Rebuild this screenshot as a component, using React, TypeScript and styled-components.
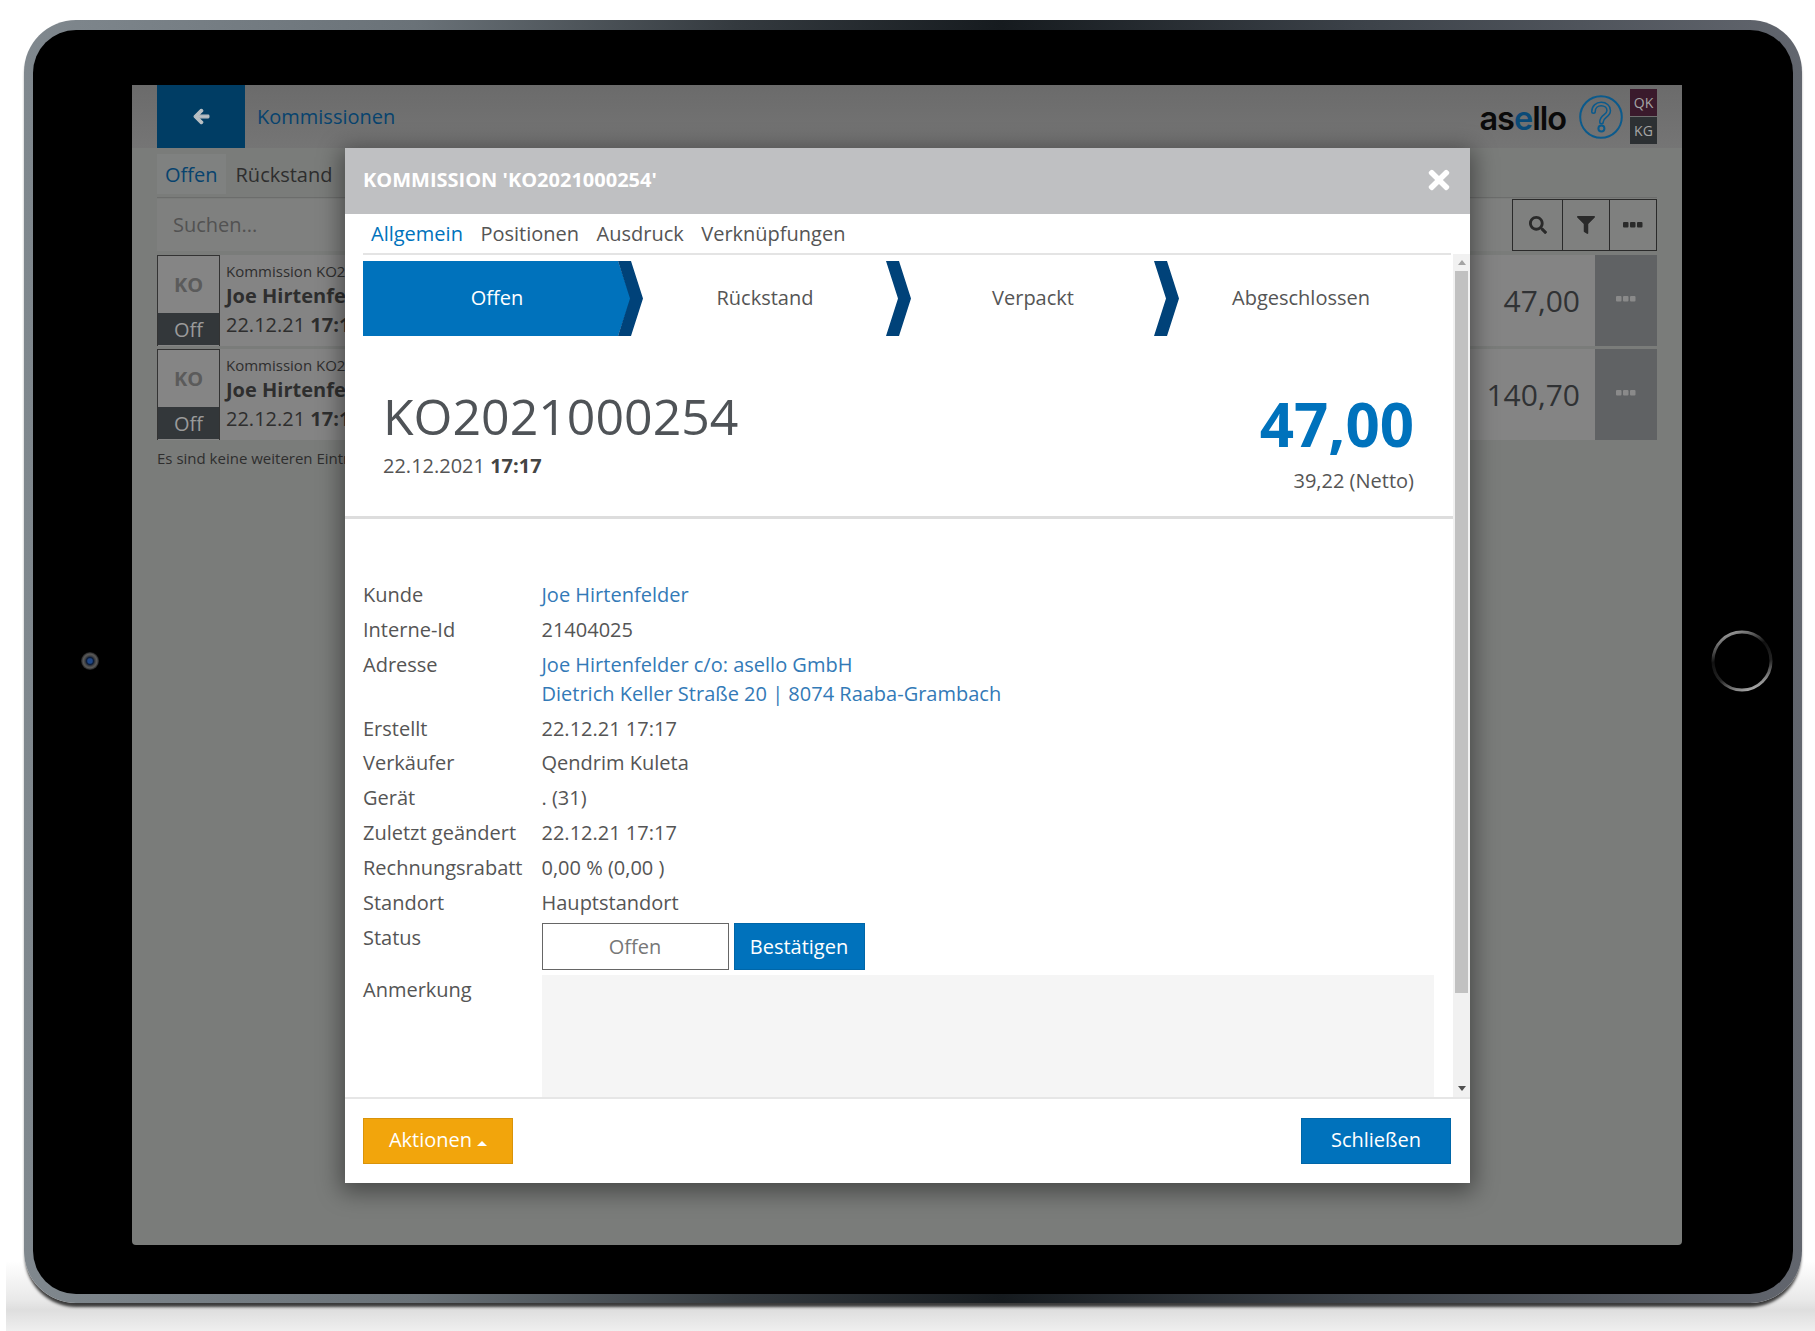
import React from 'react';
import styled, { createGlobalStyle } from 'styled-components';
import { FaArrowLeft, FaSearch, FaFilter, FaTimes } from 'react-icons/fa';

const GlobalStyle = createGlobalStyle`
  html, body { margin: 0; padding: 0; background: #fff; }
  body { font-family: "Open Sans", "Liberation Sans", sans-serif; }
  * { box-sizing: border-box; }
`;

// Device frame
const Stage = styled.div`
  position: relative;
  width: 1815px;
  height: 1331px;
  padding: 20px 13px 28px 24px;
  overflow: hidden;
  background: #fff;
`;

const Ground = styled.div`
  position: absolute;
  left: 6px;
  right: 0;
  bottom: 0;
  height: 70px;
  background: linear-gradient(to bottom, rgba(255, 255, 255, 0) 0, #e9e9e9 55%, #dedede 70%, #efefef 100%);
`;

const Rim = styled.div`
  position: relative;
  height: 1283px;
  padding: 10px 9px 9px 9px;
  border-radius: 52px;
  background: linear-gradient(to right, #80888e, #6a7278 22%, #343a3f 40%, #161b1f 55%, #3c4249 75%, #62666e);
  box-shadow: 0 5px 3px -1px rgba(0, 0, 0, 0.75);
`;

const Bezel = styled.div`
  position: relative;
  height: 100%;
  padding: 55px 111px 49px 99px;
  border-radius: 43px;
  background: #000;
`;

const Camera = styled.div`
  position: absolute;
  left: 48px;
  top: 622px;
  width: 18px;
  height: 18px;
  border-radius: 50%;
  background: radial-gradient(circle closest-side, #1d4688 0 24%, #0c1c38 40%, #444 58%, #5a5a5a 76%, #1c1c1c 100%);
`;

const HomeButton = styled.svg`
  position: absolute;
  left: 1677px;
  top: 599px;
`;

const Screen = styled.div`
  position: relative;
  height: 100%;
  border-radius: 0 0 4px 4px;
  overflow: hidden;
  background: #7a7c7a;
  color: #2e2e2e;
`;

// Background app
const AppHeader = styled.header`
  display: flex;
  align-items: center;
  height: 63px;
  padding: 0 25px;
  background: linear-gradient(to bottom, #6b6b6b, #757575);
`;

const BackButton = styled.div`
  display: flex;
  align-items: center;
  justify-content: center;
  width: 88px;
  height: 63px;
  background: #003d64;
  color: #b9c0c4;
  font-size: 17px;

  svg { stroke: currentColor; stroke-width: 34; }
`;

const AppTitle = styled.div`
  margin-left: 12px;
  font-size: 20px;
  color: #07436e;
`;

const Logo = styled.div`
  margin-left: auto;
  margin-top: 6px;
  font-family: Inter, "Open Sans", sans-serif;
  font-size: 32.5px;
  font-weight: 600;
  letter-spacing: -1px;
  color: #0a0a0a;
  line-height: 1;

  span { color: #0a4a77; }
`;

const HelpIcon = styled.svg`
  margin-left: 13px;
  margin-right: 7px;
`;

const UserStack = styled.div`
  display: flex;
  flex-direction: column;
  gap: 1px;
`;

const UserBadge = styled.div<{ $bg: string }>`
  display: flex;
  align-items: center;
  justify-content: center;
  width: 27px;
  height: 27px;
  background: ${(p) => p.$bg};
  color: #a5a5a5;
  font-size: 14px;
`;

const AppContent = styled.div`
  padding: 6px 25px 0;
`;

const AppTabs = styled.div`
  display: flex;
  height: 44px;
  padding-bottom: 3px;
  border-bottom: 1px solid #6c6d6c;
`;

const AppTab = styled.div<{ $active?: boolean }>`
  display: flex;
  align-items: center;
  padding: 0 8px;
  margin-right: 2px;
  font-size: 20px;
  background: ${(p) => (p.$active ? '#7f8180' : 'transparent')};
  color: ${(p) => (p.$active ? '#07436e' : '#2e2e2e')};
`;

const SearchBar = styled.div`
  display: flex;
  height: 52px;
  margin-top: 1px;
  margin-bottom: 4px;
  background: #7f807f;
`;

const SearchText = styled.div`
  flex: 1;
  padding: 12px 16px 0;
  font-size: 20px;
  color: #525252;
`;

const ToolButton = styled.div<{ $width: number }>`
  display: flex;
  align-items: center;
  justify-content: center;
  width: ${(p) => p.$width}px;
  height: 52px;
  border: 1px solid #2a2a2a;
  margin-left: -1px;
  background: #7f807f;
  color: #2a2a2a;
  font-size: 18px;
`;

const Dots = styled.svg`
  display: block;
`;

const OrderList = styled.div`
  display: flex;
  flex-direction: column;
  gap: 3px;
`;

const OrderRow = styled.div`
  display: flex;
  height: 91px;
  background: #848484;
`;

const OrderBadge = styled.div`
  display: flex;
  flex-direction: column;
  width: 63px;
  border: 1px solid #333;
  border-bottom-width: 0;
  background: #858585;
`;

const BadgeCode = styled.div`
  flex: 1;
  display: flex;
  align-items: center;
  justify-content: center;
  font-size: 20px;
  font-weight: 700;
  color: #5b5b5b;
`;

const BadgeStatus = styled.div`
  display: flex;
  align-items: center;
  justify-content: center;
  height: 32px;
  margin-bottom: 1px;
  background: #33373a;
  color: #9a9a9a;
  font-size: 20px;
`;

const OrderInfo = styled.div`
  padding: 6px 0 0 6px;
  white-space: nowrap;
`;

const OrderKind = styled.div`
  font-size: 15px;
  line-height: 21px;
`;

const OrderName = styled.div`
  font-size: 20px;
  line-height: 28px;
  font-weight: 700;
`;

const OrderDate = styled.div`
  font-size: 20px;
  line-height: 30px;
`;

const OrderAmount = styled.div`
  margin-left: auto;
  align-self: center;
  padding-right: 15px;
  font-size: 30px;
  color: #303234;
`;

const OrderMore = styled.div`
  display: flex;
  align-items: center;
  justify-content: center;
  width: 62px;
  background: #606264;
  padding-bottom: 3px;
`;

const EndNote = styled.div`
  margin-top: 8px;
  font-size: 15px;
  color: #2e2e2e;
`;

// Modal
const Modal = styled.section`
  position: absolute;
  left: 213px;
  top: 63px;
  width: 1125px;
  height: 1035px;
  display: flex;
  flex-direction: column;
  background: #fff;
  color: #555;
  box-shadow: 0 5px 22px 4px rgba(0, 0, 0, 0.42);
`;

const ModalHeader = styled.div`
  display: flex;
  align-items: center;
  justify-content: space-between;
  flex: none;
  height: 66px;
  padding: 0 16px 2px 18px;
  background: #bfc0c2;
  color: #fff;
`;

const ModalTitle = styled.div`
  font-size: 20px;
  font-weight: 700;
  margin-top: -1px;
`;

const ModalTabs = styled.nav`
  display: flex;
  flex: none;
  gap: 17.5px;
  height: 41px;
  margin: 0 19px 0 18px;
  padding: 2px 0 0 8px;
  border-bottom: 2px solid #e4e4e4;
`;

const ModalTab = styled.div<{ $active?: boolean }>`
  font-size: 20px;
  line-height: 36px;
  color: ${(p) => (p.$active ? '#0072bc' : '#555')};
`;

const ModalMiddle = styled.div`
  display: flex;
  flex: 1;
  min-height: 0;
  border-bottom: 2px solid #e6e6e6;
  margin-top: -1px;
`;

const ScrollPane = styled.div`
  flex: 1;
  min-width: 0;
  overflow: hidden;
  padding-top: 7px;
`;

const Scrollbar = styled.div`
  display: flex;
  flex-direction: column;
  align-items: center;
  flex: none;
  width: 17px;
  background: #f1f1f1;
`;

const ScrollArrow = styled.div<{ $up?: boolean }>`
  flex: none;
  width: 0;
  height: 5px;
  margin: 6px 0;
  border-left: 4px solid transparent;
  border-right: 4px solid transparent;
  ${(p) =>
    p.$up ? 'border-bottom: 5px solid #a3a3a3;' : 'border-top: 5px solid #505050;'}
`;

const ScrollThumb = styled.div`
  flex: none;
  width: 13px;
  height: 722px;
  background: #c1c1c1;
`;

const ScrollRest = styled.div`
  flex: 1;
`;

const Stepper = styled.div`
  display: flex;
  padding-left: 18px;
`;

const Step = styled.div<{ $active?: boolean; $last?: boolean }>`
  position: relative;
  display: flex;
  align-items: center;
  justify-content: center;
  flex: none;
  width: 268px;
  height: 75px;
  padding-bottom: 2px;
  font-size: 20px;
  color: ${(p) => (p.$active ? '#fff' : '#555')};

  &::before {
    content: '';
    display: ${(p) => (p.$active ? 'block' : 'none')};
    position: absolute;
    inset: 0;
    background: #0072bc;
    clip-path: polygon(0 0, 255px 0, 268px 50%, 255px 100%, 0 100%);
  }

  &::after {
    content: '';
    display: ${(p) => (p.$last ? 'none' : 'block')};
    position: absolute;
    left: 255px;
    top: 0;
    width: 25px;
    height: 100%;
    background: #004279;
    clip-path: polygon(0 0, 13px 0, 25px 50%, 13px 100%, 0 100%, 12px 50%);
    z-index: 1;
  }
`;

const StepLabel = styled.span`
  position: relative;
`;

const Hero = styled.div`
  display: flex;
  justify-content: space-between;
  height: 183px;
  padding: 46px 39px 0 38px;
  border-bottom: 3px solid #ddd;
`;

const OrderNumber = styled.div`
  font-size: 50px;
  line-height: 68px;
  font-weight: 400;
  color: #4f5357;
`;

const HeroMeta = styled.div`
  margin-top: 1px;
  font-size: 20px;
  line-height: 29px;
  b { font-weight: 700; color: #444; }
`;

const HeroRight = styled.div`
  margin-top: 5px;
  text-align: right;
`;

const HeroAmount = styled.div`
  font-size: 60px;
  line-height: 74px;
  font-weight: 700;
  color: #0072bc;
`;

const HeroNet = styled.div`
  margin-top: 5px;
  font-size: 20px;
  line-height: 29px;
`;

const Details = styled.div`
  display: grid;
  grid-template-columns: 178.5px 1fr;
  row-gap: 5.85px;
  padding: 61px 19px 0 18px;
  font-size: 20px;
  line-height: 29px;
`;

const Label = styled.div``;

const Value = styled.div``;

const ValueLink = styled.div`
  color: #337ab7;
`;

const StatusControls = styled.div`
  display: flex;
  gap: 5px;
  height: 47px;
`;

const StatusBox = styled.div`
  display: flex;
  align-items: center;
  justify-content: center;
  width: 187px;
  border: 1px solid #666;
  color: #777;
  font-size: 20px;
`;

const ModalButton = styled.div<{ $color?: string; $width: number; $edge?: string }>`
  display: flex;
  align-items: center;
  justify-content: center;
  gap: 5px;
  width: ${(p) => p.$width}px;
  padding-bottom: 3px;
  border: 1px solid ${(p) => p.$edge ?? '#0066a8'};
  background: ${(p) => p.$color ?? '#0072bc'};
  color: #fff;
  font-size: 20px;
`;

const ConfirmButton = styled(ModalButton)`
  padding-bottom: 0;
`;

const NoteField = styled.div`
  height: 160px;
  background: #f5f5f5;
`;

const ModalFooter = styled.footer`
  display: flex;
  flex: none;
  justify-content: space-between;
  height: 84px;
  padding: 19px 19px 19px 18px;
`;

const Caret = styled.span`
  width: 0;
  height: 0;
  margin-top: 7px;
  border-left: 5px solid transparent;
  border-right: 5px solid transparent;
  border-bottom: 5px solid #fff;
`;

const DotsIcon = ({ color }: { color: string }) => (
  <Dots width="20" height="6" viewBox="0 0 20 6" fill={color}>
    <rect x="0" y="0" width="5.5" height="5.5" rx="1" />
    <rect x="7" y="0" width="5.5" height="5.5" rx="1" />
    <rect x="14" y="0" width="5.5" height="5.5" rx="1" />
  </Dots>
);

const Help = () => (
  <HelpIcon width="44" height="44" viewBox="0 0 44 44" fill="none">
    <circle cx="22" cy="22" r="20.8" stroke="#0b5a8c" strokeWidth="2" />
    <path
      d="M14.5 16.5c0-4.4 3.4-7.5 7.7-7.5s7.5 2.8 7.5 6.4c0 5.8-7.2 5.4-7.2 11.6"
      stroke="#0b5a8c"
      strokeWidth="5"
      strokeLinecap="round"
    />
    <path
      d="M14.5 16.5c0-4.4 3.4-7.5 7.7-7.5s7.5 2.8 7.5 6.4c0 5.8-7.2 5.4-7.2 11.6"
      stroke="#707070"
      strokeWidth="2"
      strokeLinecap="round"
    />
    <circle cx="22.4" cy="33.5" r="3" stroke="#0b5a8c" strokeWidth="2" />
  </HelpIcon>
);

const orders = [
  { code: 'KO2021000254', amount: '47,00' },
  { code: 'KO2021000253', amount: '140,70' },
];

const details: { label: string; value: string[]; link?: boolean }[] = [
  { label: 'Kunde', value: ['Joe Hirtenfelder'], link: true },
  { label: 'Interne-Id', value: ['21404025'] },
  { label: 'Adresse', value: ['Joe Hirtenfelder c/o: asello GmbH', 'Dietrich Keller Straße 20 | 8074 Raaba-Grambach'], link: true },
  { label: 'Erstellt', value: ['22.12.21 17:17'] },
  { label: 'Verkäufer', value: ['Qendrim Kuleta'] },
  { label: 'Gerät', value: ['. (31)'] },
  { label: 'Zuletzt geändert', value: ['22.12.21 17:17'] },
  { label: 'Rechnungsrabatt', value: ['0,00 % (0,00 )'] },
  { label: 'Standort', value: ['Hauptstandort'] },
];

const steps = ['Offen', 'Rückstand', 'Verpackt', 'Abgeschlossen'];

const App = () => (
  <Stage>
    <GlobalStyle />
    <Ground />
    <Rim>
      <Bezel>
        <Camera />
        <HomeButton width="64" height="64" viewBox="0 0 64 64" fill="none">
          <defs>
            <linearGradient id="ring" x1="0.3" y1="0" x2="0.7" y2="1">
              <stop offset="0" stopColor="#9a9a9a" />
              <stop offset="0.35" stopColor="#111" />
              <stop offset="0.65" stopColor="#222" />
              <stop offset="1" stopColor="#b0b0b0" />
            </linearGradient>
          </defs>
          <circle cx="32" cy="32" r="29" stroke="url(#ring)" strokeWidth="3" />
        </HomeButton>
        <Screen>
          <AppHeader>
            <BackButton>
              <FaArrowLeft />
            </BackButton>
            <AppTitle>Kommissionen</AppTitle>
            <Logo>
              as<span>e</span>llo
            </Logo>
            <Help />
            <UserStack>
              <UserBadge $bg="#3a1a2c">QK</UserBadge>
              <UserBadge $bg="#2c3033">KG</UserBadge>
            </UserStack>
          </AppHeader>
          <AppContent>
            <AppTabs>
              <AppTab $active>Offen</AppTab>
              <AppTab>Rückstand</AppTab>
            </AppTabs>
            <SearchBar>
              <SearchText>Suchen...</SearchText>
              <ToolButton $width={51}>
                <FaSearch />
              </ToolButton>
              <ToolButton $width={48}>
                <FaFilter />
              </ToolButton>
              <ToolButton $width={48}>
                <DotsIcon color="#2a2a2a" />
              </ToolButton>
            </SearchBar>
            <OrderList>
              {orders.map((order) => (
                <OrderRow key={order.code}>
                  <OrderBadge>
                    <BadgeCode>KO</BadgeCode>
                    <BadgeStatus>Off</BadgeStatus>
                  </OrderBadge>
                  <OrderInfo>
                    <OrderKind>Kommission {order.code}</OrderKind>
                    <OrderName>Joe Hirtenfelder</OrderName>
                    <OrderDate>
                      22.12.21 <b>17:17</b>
                    </OrderDate>
                  </OrderInfo>
                  <OrderAmount>{order.amount}</OrderAmount>
                  <OrderMore>
                    <DotsIcon color="#8a8a8a" />
                  </OrderMore>
                </OrderRow>
              ))}
            </OrderList>
            <EndNote>Es sind keine weiteren Einträge vorhanden</EndNote>
          </AppContent>
          <Modal>
            <ModalHeader>
              <ModalTitle>KOMMISSION 'KO2021000254'</ModalTitle>
              <FaTimes size={30} />
            </ModalHeader>
            <ModalTabs>
              <ModalTab $active>Allgemein</ModalTab>
              <ModalTab>Positionen</ModalTab>
              <ModalTab>Ausdruck</ModalTab>
              <ModalTab>Verknüpfungen</ModalTab>
            </ModalTabs>
            <ModalMiddle>
              <ScrollPane>
                <Stepper>
                  {steps.map((step, i) => (
                    <Step key={step} $active={i === 0} $last={i === steps.length - 1}>
                      <StepLabel>{step}</StepLabel>
                    </Step>
                  ))}
                </Stepper>
                <Hero>
                  <div>
                    <OrderNumber>KO2021000254</OrderNumber>
                    <HeroMeta>
                      22.12.2021 <b>17:17</b>
                    </HeroMeta>
                  </div>
                  <HeroRight>
                    <HeroAmount>47,00</HeroAmount>
                    <HeroNet>39,22 (Netto)</HeroNet>
                  </HeroRight>
                </Hero>
                <Details>
                  {details.map((row) => (
                    <React.Fragment key={row.label}>
                      <Label>{row.label}</Label>
                      {row.link ? (
                        <ValueLink>
                          {row.value.map((line) => (
                            <div key={line}>{line}</div>
                          ))}
                        </ValueLink>
                      ) : (
                        <Value>{row.value[0]}</Value>
                      )}
                    </React.Fragment>
                  ))}
                  <Label>Status</Label>
                  <StatusControls>
                    <StatusBox>Offen</StatusBox>
                    <ConfirmButton $width={131}>Bestätigen</ConfirmButton>
                  </StatusControls>
                  <Label>Anmerkung</Label>
                  <NoteField />
                </Details>
              </ScrollPane>
              <Scrollbar>
                <ScrollArrow $up />
                <ScrollThumb />
                <ScrollRest />
                <ScrollArrow />
              </Scrollbar>
            </ModalMiddle>
            <ModalFooter>
              <ModalButton $width={150} $color="#f2a50c" $edge="#d9930a">
                Aktionen <Caret />
              </ModalButton>
              <ModalButton $width={150}>Schließen</ModalButton>
            </ModalFooter>
          </Modal>
        </Screen>
      </Bezel>
    </Rim>
  </Stage>
);

export default App;
